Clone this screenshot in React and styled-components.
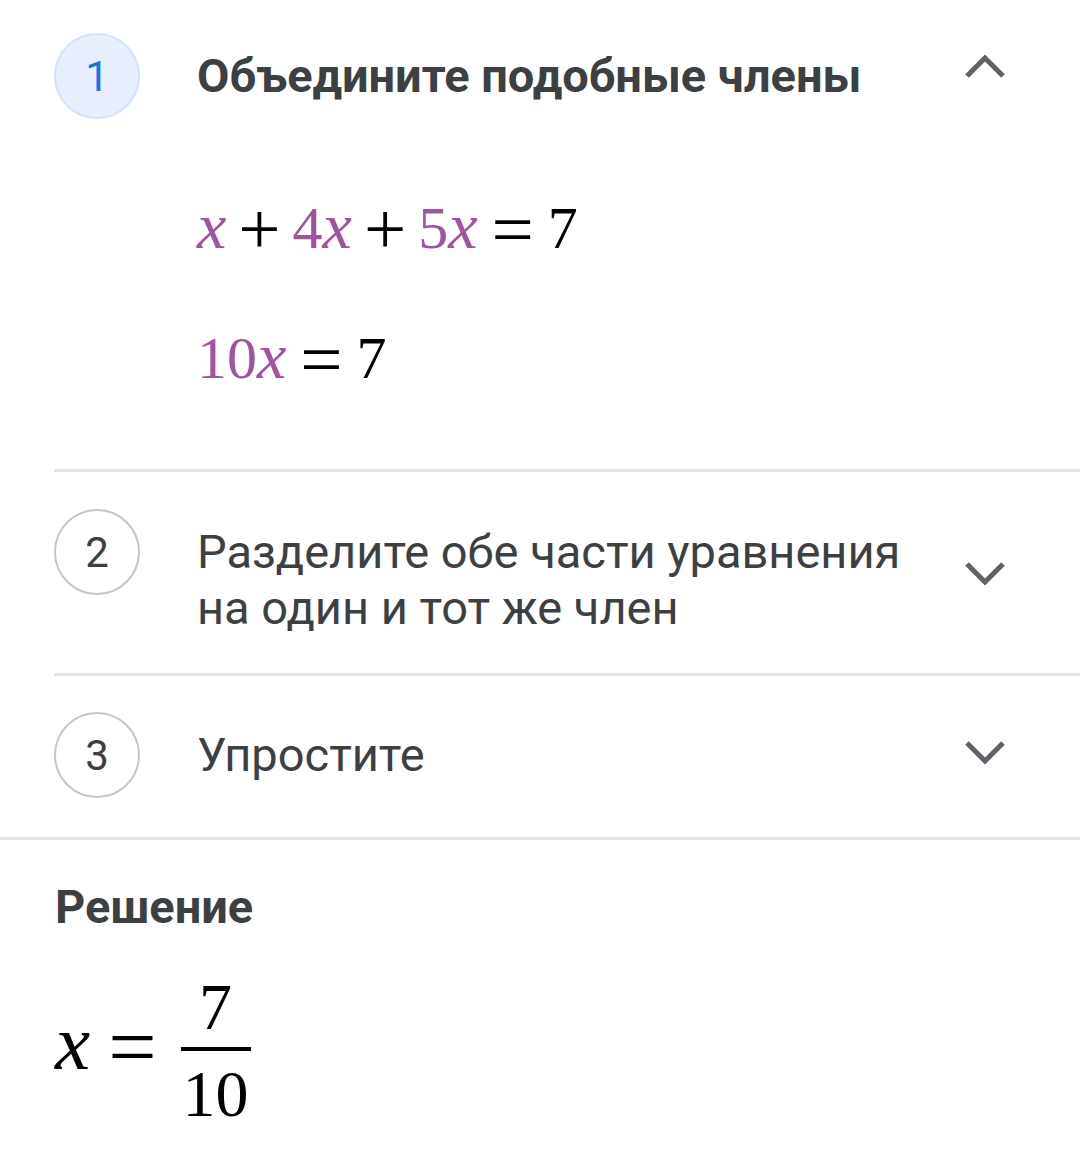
import React from 'react';
import styled, { createGlobalStyle } from 'styled-components';

const GlobalStyle = createGlobalStyle`
  html, body {
    margin: 0;
    padding: 0;
    background: #ffffff;
  }
  body {
    font-family: Roboto, 'Noto Sans', sans-serif;
    color: #3c4043;
  }
`;

const Page = styled.div`
  width: 1080px;
  background: #fff;
`;

const StepList = styled.div`
  padding-left: 54px;
`;

const Step = styled.section`
  border-bottom: ${(p) => (p.$last ? 'none' : '3px solid #e3e3e3')};
  padding: ${(p) => p.$pad};
`;

const StepHeader = styled.div`
  display: grid;
  grid-template-columns: 86px 1fr 80px;
  align-items: start;
  padding-right: 55px;
`;

const Circle = styled.div`
  width: 86px;
  height: 86px;
  box-sizing: border-box;
  border-radius: 50%;
  display: flex;
  align-items: center;
  justify-content: center;
  font-size: 42px;
  border: 2.5px solid ${(p) => (p.$active ? '#d2e3fc' : '#c6c6c6')};
  background: ${(p) => (p.$active ? '#e8f0fe' : '#ffffff')};
  color: ${(p) => (p.$active ? '#1a73e8' : '#3c4043')};
`;

const StepTitle = styled.div`
  margin: 15px 26px 0 57px;
  font-size: 47px;
  line-height: 56px;
  font-weight: ${(p) => (p.$bold ? 700 : 400)};
  color: #3c4043;
`;

const ChevronBox = styled.div`
  align-self: center;
  display: flex;
  justify-content: center;
  transform: translateY(${(p) => p.$shift || 0}px);
`;

const MathBlock = styled.div`
  padding: 66px 0 82px 143px;
  display: flex;
  flex-direction: column;
  gap: 58px;
`;

const MathLine = styled.div`
  height: 72px;
  font-family: 'Liberation Serif', 'Times New Roman', serif;
  font-size: 60px;
  line-height: 72px;
  color: #000;
  display: flex;
  align-items: baseline;
  white-space: pre;
`;

const Term = styled.span`
  color: ${(p) => (p.$hl ? '#a0539f' : '#000')};
`;

const Var = styled.i`
  display: inline-block;
  font-style: italic;
  line-height: 1;
  font-size: ${(p) => p.$scale || 1.1}em;
  transform: translateY(${(p) => p.$dy || 0}px);
`;

const Op = styled.span`
  display: inline-block;
  line-height: 1;
  font-size: ${(p) => p.$scale || 1.25}em;
  margin: 0 ${(p) => p.$gap || 12}px;
  transform: translateY(${(p) => p.$dy || 0}px);
`;

const Divider = styled.div`
  height: 3px;
  background: #e3e3e3;
`;

const Solution = styled.div`
  padding: 42px 0 40px 55px;
`;

const SolutionTitle = styled.div`
  font-size: 47px;
  line-height: 50px;
  font-weight: 700;
  color: #3c4043;
`;

const Answer = styled.div`
  margin-top: 43px;
  display: flex;
  align-items: center;
  font-family: 'Liberation Serif', 'Times New Roman', serif;
  font-size: 66px;
  color: #000;
`;

const Fraction = styled.span`
  display: inline-flex;
  flex-direction: column;
  align-items: center;
  margin-left: 6px;
`;

const Numerator = styled.span`
  line-height: 64px;
  padding: 0 2px 8px;
`;

const Bar = styled.span`
  align-self: stretch;
  height: 4px;
  background: #000;
`;

const Denominator = styled.span`
  line-height: 64px;
  padding: 11px 2px 0;
`;

const Chevron = ({ up, shift }) => (
  <ChevronBox $shift={shift}>
    <svg width="44" height="28" viewBox="0 0 44 28">
      <polyline
        points={up ? '4,23 22,5 40,23' : '4,5 22,23 40,5'}
        fill="none"
        stroke="#5f6368"
        strokeWidth="5"
      />
    </svg>
  </ChevronBox>
);

export default function App() {
  return (
    <Page>
      <GlobalStyle />
      <StepList>
        <Step $pad="33px 0 0 0">
          <StepHeader>
            <Circle $active>1</Circle>
            <StepTitle $bold>Объедините подобные члены</StepTitle>
            <Chevron up shift={-9} />
          </StepHeader>
          <MathBlock>
            <MathLine>
              <Term $hl><Var>x</Var></Term>
              <Op $dy={6}>+</Op>
              <Term $hl>4<Var>x</Var></Term>
              <Op $dy={6}>+</Op>
              <Term $hl>5<Var>x</Var></Term>
              <Op $dy={6} $gap={14}>=</Op>
              <Term>7</Term>
            </MathLine>
            <MathLine>
              <Term $hl>10<Var>x</Var></Term>
              <Op $dy={6} $gap={14}>=</Op>
              <Term>7</Term>
            </MathLine>
          </MathBlock>
        </Step>
        <Step $pad="37px 0 37px 0">
          <StepHeader>
            <Circle>2</Circle>
            <StepTitle>Разделите обе части уравнения на один и тот же член</StepTitle>
            <Chevron />
          </StepHeader>
        </Step>
        <Step $last $pad="36px 0 39px 0">
          <StepHeader>
            <Circle>3</Circle>
            <StepTitle>Упростите</StepTitle>
            <Chevron shift={-3} />
          </StepHeader>
        </Step>
      </StepList>
      <Divider />
      <Solution>
        <SolutionTitle>Решение</SolutionTitle>
        <Answer>
          <Var $scale={1.2} $dy={-8}>x</Var>
          <Op $scale={1.3} $gap={18} $dy={-3}>=</Op>
          <Fraction>
            <Numerator>7</Numerator>
            <Bar />
            <Denominator>10</Denominator>
          </Fraction>
        </Answer>
      </Solution>
    </Page>
  );
}
